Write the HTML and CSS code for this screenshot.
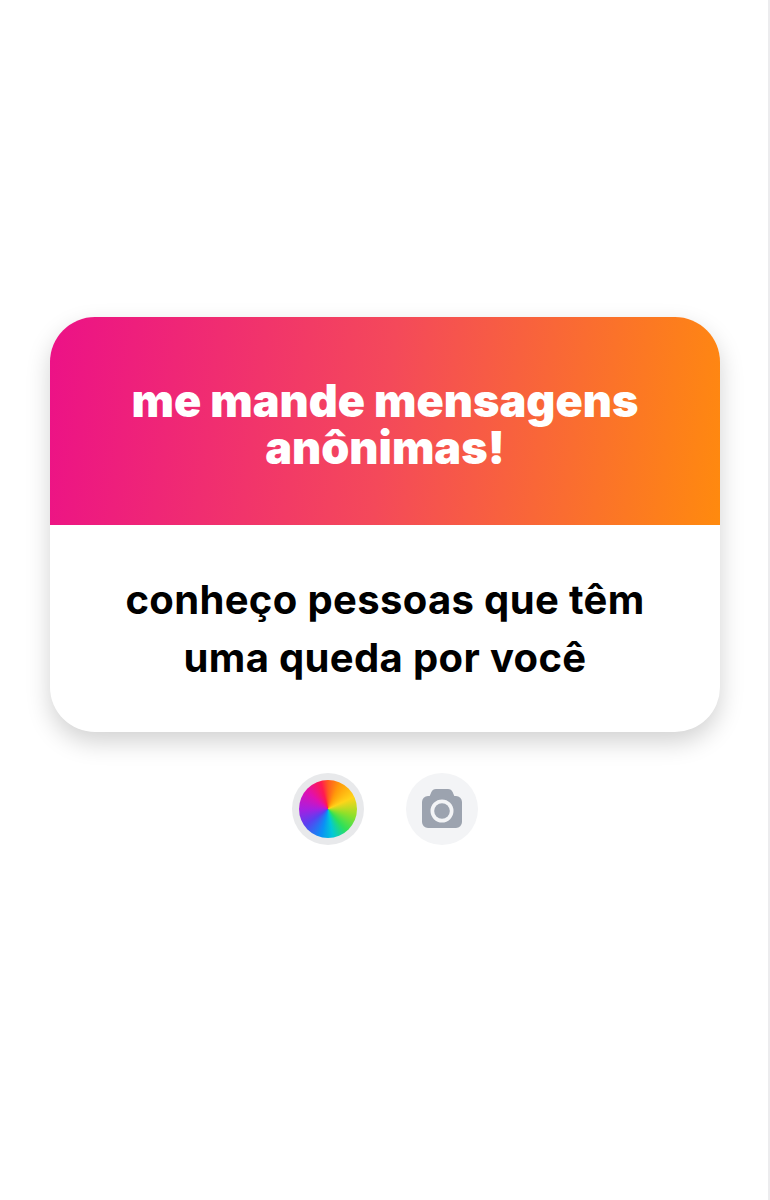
FILE: index.html
```html
<!DOCTYPE html>
<html lang="pt-BR">
<head>
    <meta charset="UTF-8">
    <title>me mande mensagens anônimas!</title>
    <link rel="stylesheet" href="styles.css">
</head>
<body>
    <main class="page">
        <!-- Card -->
        <section class="card">
            <div class="card-header">
                <h1>me mande mensagens<br>anônimas!</h1>
            </div>
            <div class="card-body">
                <p>conheço pessoas que têm<br>uma queda por você</p>
            </div>
        </section>

        <!-- Buttons -->
        <div class="actions">
            <div class="btn btn-color">
                <div class="color-wheel"></div>
            </div>
            <div class="btn btn-camera">
                <svg width="40" height="40" viewBox="0 0 40 40">
                    <path fill="#9ca3af" fill-rule="evenodd" d="M14 0h12a5 5 0 0 1 4.600 3l1.700 4h1.700a6 6 0 0 1 6 6v20a6 6 0 0 1-6 6H6a6 6 0 0 1-6-6V13a6 6 0 0 1 6-6h1.700l1.700-4A5 5 0 0 1 14 0zM20 10.500a11.500 11.500 0 1 0 0 23 11.500 11.500 0 0 0 0-23z"/>
                    <circle cx="20" cy="22" r="7.800" fill="#9ca3af"/>
                </svg>
            </div>
        </div>
    </main>
</body>
</html>
```

FILE: styles.css
```css
* {
    margin: 0;
    padding: 0;
    box-sizing: border-box;
}

body {
    font-family: 'Inter', 'Liberation Sans', sans-serif;
    background-color: #fff;
}

.page {
    height: 1200px;
    padding: 317px 48px 0 50px;
    border-right: 2px solid #ececee;
}

/* Card */
.card {
    height: 415px;
    border-radius: 45px;
    overflow: hidden;
    background: #fff;
    box-shadow: 0 10px 24px rgba(0, 0, 0, 0.18);
}

.card-header {
    height: 208px;
    display: flex;
    align-items: center;
    justify-content: center;
    background: linear-gradient(97deg, #ec1187 0%, #f4495a 50%, #ff8a0e 100%);
}

.card-header h1 {
    padding-top: 6px;
    color: #fff;
    font-size: 45px;
    font-weight: 900;
    line-height: 47px;
    text-align: center;
}

.card-body {
    height: 207px;
    display: flex;
    align-items: center;
    justify-content: center;
}

.card-body p {
    color: #000;
    font-size: 40px;
    font-weight: 700;
    line-height: 58px;
    letter-spacing: 0.35px;
    text-align: center;
}

/* Buttons */
.actions {
    display: flex;
    justify-content: center;
    gap: 42px;
    margin-top: 41px;
}

.btn {
    width: 72px;
    height: 72px;
    border-radius: 50%;
    display: flex;
    align-items: center;
    justify-content: center;
}

.btn-color {
    background: #e8e9eb;
}

.btn-camera {
    background: #f3f4f6;
}

.color-wheel {
    width: 58px;
    height: 58px;
    border-radius: 50%;
    filter: blur(0.6px);
    background: conic-gradient(#ff5a20, #ff9a0a 25deg, #ffd41a 65deg, #8ee02a 105deg, #2ee05a 140deg, #00c8d8 170deg, #0a90f5 195deg, #5a40f0 235deg, #a81fe0 270deg, #e010b0 310deg, #ff1a50 345deg, #ff5a20);
}
```
